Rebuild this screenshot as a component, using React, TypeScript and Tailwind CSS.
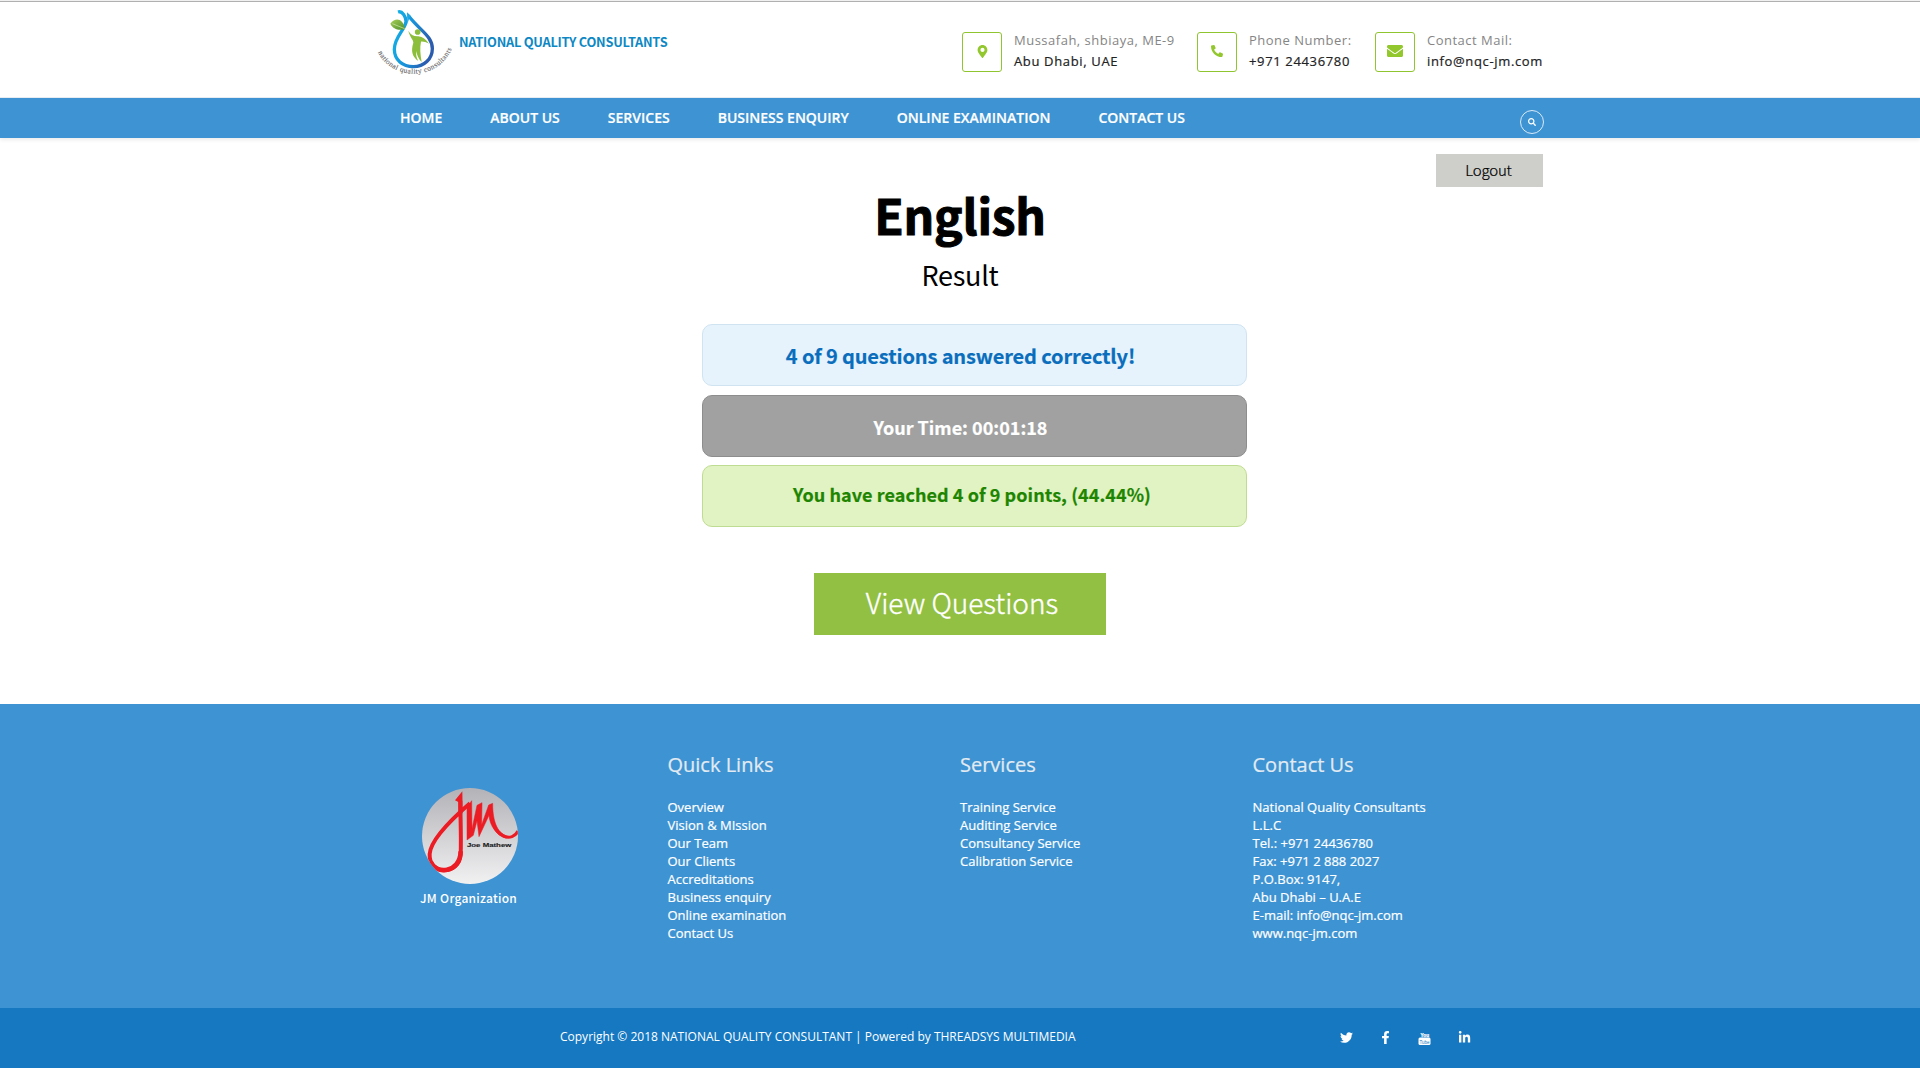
import React from 'react';
import { FaMapMarkerAlt, FaPhoneAlt, FaEnvelope, FaSearch, FaTwitter, FaFacebookF, FaLinkedinIn } from 'react-icons/fa';

const open = "font-['Open_Sans',sans-serif]";
const cjk = "font-['Noto_Sans_CJK_SC',sans-serif]";

function DropLogo() {
  return (
    <svg viewBox="0 0 270 240" className="h-20 w-[90px] shrink-0">
      <defs>
        <linearGradient id="drop" x1="0" y1="0" x2="1" y2="0.3">
          <stop offset="0" stopColor="#12b5e8" />
          <stop offset="0.55" stopColor="#1a8fd8" />
          <stop offset="1" stopColor="#2b5cae" />
        </linearGradient>
        <linearGradient id="leaf" x1="0" y1="0" x2="1" y2="1">
          <stop offset="0" stopColor="#a9cf55" />
          <stop offset="1" stopColor="#4d8f2c" />
        </linearGradient>
        <path id="arc" d="M24 145 C62 226 200 240 248 130" />
      </defs>
      <path d="M84 24 C97 20 108 38 108 52 C107 76 73 98 73 136 C73 168 98 188 130 188 C162 188 187 165 187 134 C187 96 150 80 116 36" fill="none" stroke="url(#drop)" strokeWidth="10" />
      <path d="M111 25 L121 34 L112 60 Z" fill="#1ba8e2" />
      <path d="M61 59 C76 40 98 42 105 74 C88 82 70 76 61 59Z" fill="url(#leaf)" />
      <path d="M67 59 L104 74" stroke="#d7ebb4" strokeWidth="2" />
      <circle cx="143" cy="84" r="8.500" fill="#8cbe3c" />
      <path d="M115 80 C122 93 132 98 145 97 C158 98 168 106 177 119 C168 114 158 112 153 113 C149 132 151 150 155 174 C145 164 140 152 139 141 C137 152 140 162 145 171 C127 158 122 142 130 116 C130 106 119 99 115 80Z" fill="#8cbe3c" />
      <text className="font-['Liberation_Serif',serif]" fontSize="22" fill="#666" stroke="#666" strokeWidth="0.3">
        <textPath href="#arc" textLength="276">national quality consultants</textPath>
      </text>
    </svg>
  );
}

function JmLogo() {
  return (
    <svg viewBox="36 24 288 288" className="size-24">
      <defs>
        <linearGradient id="disc" x1="0" y1="0" x2="0" y2="1">
          <stop offset="0" stopColor="#b3b2b7" />
          <stop offset="1" stopColor="#f1f1f2" />
        </linearGradient>
        <clipPath id="round"><circle cx="180" cy="168" r="144" /></clipPath>
      </defs>
      <circle cx="180" cy="168" r="144" fill="url(#disc)" />
      <g clipPath="url(#round)" fill="none" stroke="#ec1c24">
        <path d="M151 62 C151 110 154 170 152 222 C149 288 55 286 59 222 C62 180 120 122 180 70" strokeWidth="12" />
        <path d="M152 214 C151 281 74 284 62 245" strokeWidth="14" />
        <path d="M135 61 L157 34 L158 100 L145 100 L145 66Z" fill="#ec1c24" stroke="none" />
        <path d="M171 82 L185 62 L186 146 L201 76 L216 68 L215 134 L236 75 L248 70 C248 142 272 166 300 170 L288 174 C258 166 239 136 237 106 L207 170 L201 122 L190 166 L171 180Z" fill="#ec1c24" stroke="#ec1c24" strokeWidth="1.500" />
        <path d="M243 105 C254 178 308 186 324 153" strokeWidth="9" />
      </g>
      <text x="171" y="200" textLength="133" lengthAdjust="spacingAndGlyphs" className="font-['Liberation_Sans',sans-serif] font-bold" fontSize="17.500" fill="#1c1c1c" stroke="#1c1c1c" strokeWidth="0.4">Joe Mathew</text>
    </svg>
  );
}

function YoutubeStack() {
  return (
    <svg viewBox="0 0 26 28" className="h-[14px] w-[13px] overflow-visible">
      <text x="5" y="11.500" fontSize="12" textLength="17" lengthAdjust="spacingAndGlyphs" fill="#fff" stroke="#fff" strokeWidth="0.5" className="font-['Liberation_Sans',sans-serif] font-bold">You</text>
      <rect x="1" y="13" width="24" height="15" rx="3" fill="#fff" />
      <text x="3" y="25" fontSize="11" textLength="20" lengthAdjust="spacingAndGlyphs" fill="#1578c1" className="font-['Liberation_Sans',sans-serif]">Tube</text>
    </svg>
  );
}

function Contact({ icon, top, bottom, className }: { icon: React.ReactNode; top: string; bottom: string; className: string }) {
  return (
    <div className={'flex ' + className}>
      <div className="flex size-10 items-center justify-center rounded-[3px] border border-[#8fc52f] pb-[2px] text-[#93c72e]">{icon}</div>
      <div className="ml-3 text-[13px] leading-[21px] whitespace-nowrap">
        <div className="-mt-[2px] tracking-[0.5px] text-[#858585]">{top}</div>
        <div className="tracking-[0.650px] text-[#222] [-webkit-text-stroke:0.2px_#222]">{bottom}</div>
      </div>
    </div>
  );
}

function Column({ title, items }: { title: string; items: string[] }) {
  return (
    <div className="w-[292.500px] text-white">
      <h3 className="text-[20px] leading-6 text-[#e3ebf2] [-webkit-text-stroke:0.2px_#e3ebf2]">{title}</h3>
      <ul className="mt-[21px] text-[13px] leading-[18px] whitespace-nowrap [-webkit-text-stroke:0.2px_white]">
        {items.map((t) => <li key={t}>{t}</li>)}
      </ul>
    </div>
  );
}

export default function App() {
  return (
    <div className={'h-[1068px] w-[1920px] overflow-hidden bg-white ' + open}>
      <header className="h-[98px] border-b border-[#e8eef3]">
        <div className="h-[2px] border-b border-[#b0b0b0] bg-[#f0f0f0]" />
        <div className="ml-[370px] flex pt-[2px]">
          <DropLogo />
          <div className={'mt-[27px] -ml-px w-[503px] text-[12.800px] leading-[22px] font-bold tracking-[-0.250px] text-[#0d88c4] ' + cjk}>NATIONAL QUALITY CONSULTANTS</div>
          <div className="mt-[28px] flex">
            <Contact className="w-[235px]" icon={<FaMapMarkerAlt size={13} />} top="Mussafah, shbiaya, ME-9" bottom="Abu Dhabi, UAE" />
            <Contact className="w-[178px]" icon={<FaPhoneAlt size={12} />} top="Phone Number:" bottom="+971 24436780" />
            <Contact className="" icon={<FaEnvelope size={16} />} top="Contact Mail:" bottom="info@nqc-jm.com" />
          </div>
        </div>
      </header>
      <nav className="flex h-10 bg-[#3e93d3] pl-[400px] text-[14px] leading-10 font-semibold text-white shadow-[0_2px_4px_rgba(0,0,0,0.08)]">
        <div className="flex w-[1120px] gap-12 [-webkit-text-stroke:0.2px_white]">
          {['HOME', 'ABOUT US', 'SERVICES', 'BUSINESS ENQUIRY', 'ONLINE EXAMINATION', 'CONTACT US'].map((t) => <a key={t}>{t}</a>)}
        </div>
        <div className="mt-3 flex size-6 items-center justify-center rounded-full border border-white/80"><FaSearch size={8} /></div>
      </nav>
      <main className={'flex h-[566px] flex-col items-center text-black ' + cjk}>
        <div className="mt-4 mr-[377px] flex h-[33px] w-[107px] shrink-0 items-center justify-center self-end bg-[#cecfca] pr-[2px] text-[15px] font-light tracking-[-0.200px] [-webkit-text-stroke:0.2px_black]">Logout</div>
        <h1 className="mt-[2px] text-[48px] leading-[50px] font-bold tracking-[-0.200px] [-webkit-text-stroke:1px_black]">English</h1>
        <h2 className="mt-[21px] text-[27px] leading-[30px] tracking-[-0.300px]">Result</h2>
        <div className="mt-[34px] ml-[29px] flex h-[62px] w-[545px] items-center justify-center rounded-[10px] border border-[#cfe3f0] bg-[#e6f3fc] pt-[2px] pr-[28px] text-[20px] font-bold tracking-[-0.130px] text-[#0a6ebd] [-webkit-text-stroke:0.2px_#0a6ebd]">4 of 9 questions answered correctly!</div>
        <div className="mt-[9px] ml-[29px] flex h-[62px] w-[545px] items-center justify-center rounded-[10px] border border-[#8d8d8d] bg-[#a1a1a1] pt-[3px] pr-[28px] text-[18px] font-bold text-white [-webkit-text-stroke:0.2px_white]">Your Time: 00:01:18</div>
        <div className="mt-[8px] ml-[29px] flex h-[62px] w-[545px] items-center justify-center rounded-[10px] border border-[#bfdd92] bg-[#e1f2c3] pr-[5px] pb-[3px] text-[18px] font-bold tracking-[0.060px] text-[#1d8500] [-webkit-text-stroke:0.2px_#1d8500]">You have reached 4 of 9 points, (44.44%)</div>
        <button className="mt-[46px] flex h-[62px] w-[292px] items-center justify-center bg-[#92c043] pb-[4px] pl-1 text-[28px] font-light text-white [-webkit-text-stroke:0.4px_white]">View Questions</button>
      </main>
      <footer>
        <div className="flex h-[304px] bg-[#3e93d3] pt-[49px]">
          <div className="ml-[420px] w-[247.500px] pt-[35px]">
            <div className="ml-[2px]"><JmLogo /></div>
            <div className={'mt-1 text-[12px] leading-5 font-medium tracking-[0.270px] text-white ' + cjk}>JM Organization</div>
          </div>
          <Column title="Quick Links" items={['Overview', 'Vision & MIssion', 'Our Team', 'Our Clients', 'Accreditations', 'Business enquiry', 'Online examination', 'Contact Us']} />
          <Column title="Services" items={['Training Service', 'Auditing Service', 'Consultancy Service', 'Calibration Service']} />
          <Column title="Contact Us" items={['National Quality Consultants', 'L.L.C', 'Tel.: +971 24436780', 'Fax: +971 2 888 2027', 'P.O.Box: 9147,', 'Abu Dhabi – U.A.E', 'E-mail: info@nqc-jm.com', 'www.nqc-jm.com']} />
        </div>
        <div className="flex h-[60px] bg-[#1578c1] pl-[560px] text-[12px] text-white">
          <div className="w-[780px] leading-[57px]">Copyright © 2018 NATIONAL QUALITY CONSULTANT | Powered by THREADSYS MULTIMEDIA</div>
          <div className="flex h-[59px] items-center">
            <FaTwitter size={13} className="mr-[26px]" />
            <FaFacebookF size={13} className="mr-[26px]" />
            <YoutubeStack />
            <FaLinkedinIn size={13} className="ml-[27px]" />
          </div>
        </div>
      </footer>
    </div>
  );
}
